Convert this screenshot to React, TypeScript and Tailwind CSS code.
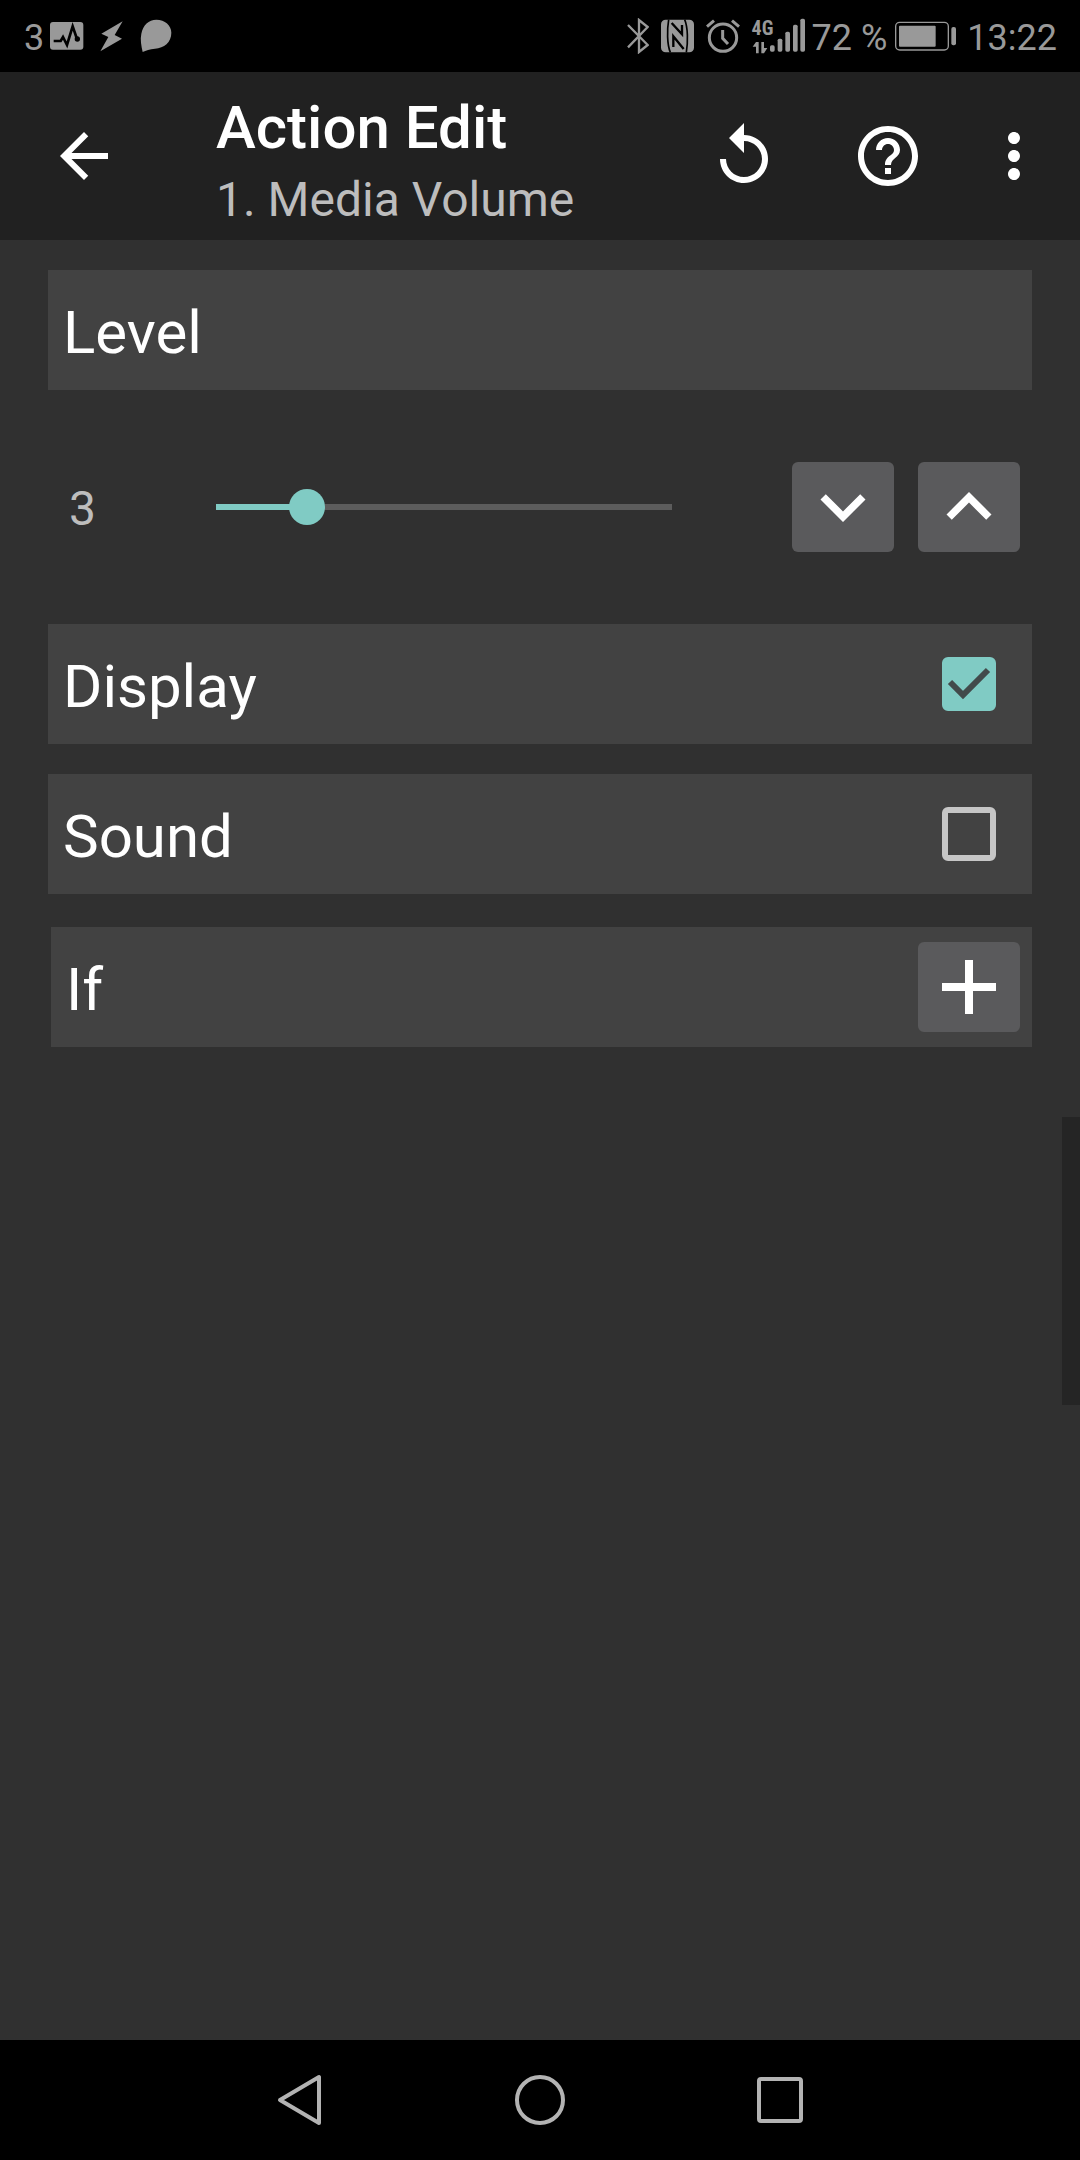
import React, { useState } from "react";
import {
  MdArrowBack,
  MdExpandLess,
  MdExpandMore,
  MdHelpOutline,
  MdMoreVert,
  MdReplay,
} from "react-icons/md";

const MAX_LEVEL = 15;

const StatusBar: React.FC = () => (
  <div className="flex h-[72px] items-center justify-between bg-black pr-[23px] pl-6 text-4xl text-[#999999]">
    <div className="flex items-center">
      <span className="pt-1">3</span>
      {/* activity monitor */}
      <svg className="ml-1.5 h-7 w-[34px]" viewBox="149 68 102 84">
        <rect x="149" y="68" width="100" height="83" rx="9" fill="currentColor" />
        <path
          d="M160 125h21l7-12 12 24 17-56 13 38"
          fill="none"
          stroke="#000"
          strokeWidth="8"
        />
        <circle cx="231" cy="119" r="8" fill="#000" />
      </svg>
      {/* bolt */}
      <svg className="ml-4 h-8 w-6" viewBox="299 62 72 96" fill="currentColor">
        <path d="M367 66l-64 37 21 10-24 43 65-38-22-11z" />
      </svg>
      {/* speech drop */}
      <svg className="ml-4 h-9 w-8" viewBox="422 55 96 108" fill="currentColor">
        <path d="M430 157c-4-18-8-38-4-55 5-26 22-42 45-42 26 0 45 17 45 39 0 29-22 46-49 48-16 1-27 6-37 10z" />
      </svg>
    </div>

    <div className="flex items-center">
      <div className="flex items-center gap-3">
        {/* bluetooth */}
        <svg
          className="h-9 w-[22px]"
          viewBox="55 55 66 108"
          fill="none"
          stroke="currentColor"
          strokeWidth="7"
        >
          <path d="M58 76l59 60-26 21V61l26 21-59 61" />
        </svg>
        {/* nfc */}
        <svg className="h-9 w-[33px]" viewBox="156 55 99 108">
          <rect x="156" y="60" width="99" height="98" rx="14" fill="currentColor" />
          <g fill="none" stroke="#000" strokeWidth="5">
            <path d="M179 60c-5 30-5 75 5 98" />
            <path d="M232 158c5-30 5-75-5-98" />
            <path d="M188 70l31 34V76" strokeWidth="7" />
            <path d="M224 148l-31-38v32" strokeWidth="7" />
          </g>
        </svg>
        {/* alarm */}
        <svg
          className="h-9 w-[34px]"
          viewBox="290 55 102 108"
          fill="none"
          stroke="currentColor"
          strokeWidth="9"
        >
          <circle cx="341" cy="114" r="41" />
          <path d="M340 91v25l16 17" />
          <path d="M293 81l21-18M389 81l-21-18" />
        </svg>
        {/* mobile network */}
        <div className="flex items-end">
          <div className="flex w-[18px] flex-col justify-between">
            <span className="font-['Liberation_Sans_Narrow','Roboto_Condensed',sans-serif] text-xl leading-4 font-bold">
              4G
            </span>
            <svg className="mt-1.5 h-3 w-[18px]" viewBox="0 0 54 36" fill="currentColor">
              <path d="M12 0h8v34h-8V14H2zM28 0h8v18h10L36 34h-8z" />
            </svg>
          </div>
          <svg className="h-9 w-9" viewBox="480 55 108 108" fill="currentColor">
            <rect x="480" y="137" width="14" height="19" rx="5" />
            <rect x="503" y="117" width="14" height="39" rx="5" />
            <rect x="526" y="96" width="14" height="60" rx="5" />
            <rect x="549" y="75" width="14" height="81" rx="5" />
            <rect x="571" y="57" width="14" height="99" rx="5" />
          </svg>
        </div>
      </div>
      <span className="ml-1.5 pt-1">72 %</span>
      {/* battery */}
      <svg className="ml-2 h-9 w-[62px]" viewBox="167 58 186 108">
        <rect
          x="169"
          y="71"
          width="158"
          height="83"
          rx="12"
          fill="none"
          stroke="currentColor"
          strokeWidth="4"
        />
        <rect x="179" y="81" width="110" height="63" rx="3" fill="currentColor" />
        <rect x="336" y="85" width="14" height="55" rx="6" fill="currentColor" />
      </svg>
      <span className="ml-2.5 pt-1">13:22</span>
    </div>
  </div>
);

const Header: React.FC = () => (
  <header className="flex h-[168px] items-center bg-[#212121] pr-3 text-white">
    <button type="button" aria-label="Back" className="flex w-[168px] justify-center">
      <MdArrowBack size={72} />
    </button>
    <div className="ml-12 flex-1 pt-4">
      <h1 className="text-6xl leading-[72px] font-medium">Action Edit</h1>
      <p className="text-5xl leading-[72px] text-[#bdbdbd]">1. Media Volume</p>
    </div>
    <button type="button" aria-label="Reset" className="flex w-36 justify-center">
      <MdReplay size={72} />
    </button>
    <button type="button" aria-label="Help" className="flex w-36 justify-center">
      <MdHelpOutline size={72} />
    </button>
    <button type="button" aria-label="More options" className="flex w-27 justify-center">
      <MdMoreVert size={72} />
    </button>
  </header>
);

interface LevelSliderProps {
  value: number;
  onChange: (value: number) => void;
}

const LevelSlider: React.FC<LevelSliderProps> = ({ value, onChange }) => (
  <div className="relative mr-[102px] flex h-9 flex-1 items-center">
    {/* track runs between the two outermost thumb centres */}
    <div className="absolute inset-x-[18px] h-1.5 bg-[#5c5c5c]">
      <div
        className="h-full bg-[#80cbc4]"
        style={{ width: `${(value / MAX_LEVEL) * 100}%` }}
      />
    </div>
    <input
      id="level"
      type="range"
      min={0}
      max={MAX_LEVEL}
      value={value}
      onChange={(e) => onChange(Number(e.target.value))}
      className="relative h-9 w-full appearance-none bg-transparent [&::-webkit-slider-thumb]:size-9 [&::-webkit-slider-thumb]:appearance-none [&::-webkit-slider-thumb]:rounded-full [&::-webkit-slider-thumb]:bg-[#80cbc4]"
    />
  </div>
);

interface CheckRowProps {
  id: string;
  label: string;
  checked: boolean;
  onChange: (checked: boolean) => void;
}

const CheckRow: React.FC<CheckRowProps> = ({ id, label, checked, onChange }) => (
  <div className="flex h-[120px] items-center justify-between bg-[#424242] pr-9 pl-[15px]">
    <label htmlFor={id} className="pt-1.5 text-6xl">
      {label}
    </label>
    <div className="relative size-[54px]">
      <input
        id={id}
        type="checkbox"
        checked={checked}
        onChange={(e) => onChange(e.target.checked)}
        className="block size-[54px] appearance-none rounded-md border-6 border-[#c6c6c6] checked:border-[#80cbc4] checked:bg-[#80cbc4]"
      />
      {checked && (
        <svg
          className="pointer-events-none absolute inset-0"
          viewBox="0 0 54 54"
          fill="none"
          stroke="#424a4b"
          strokeWidth="6"
        >
          <path d="M8 25l13 13 25-25" />
        </svg>
      )}
    </div>
  </div>
);

const squareButton =
  "flex h-[90px] w-[102px] items-center justify-center rounded-md bg-[#5a5a5c]";

const NavBar: React.FC = () => (
  <nav className="h-[120px] bg-black">
    <div className="mx-auto grid h-full w-2/3 grid-cols-3 text-[#b3b3b3]">
      <button type="button" aria-label="Back" className="flex items-center justify-center">
        <svg className="size-[54px]" viewBox="0 0 54 54" fill="none" stroke="currentColor" strokeWidth="4" strokeLinejoin="round">
          <path d="M46 4v46L7 27z" />
        </svg>
      </button>
      <button type="button" aria-label="Home" className="flex items-center justify-center">
        <svg className="size-[54px]" viewBox="0 0 54 54" fill="none" stroke="currentColor" strokeWidth="4">
          <circle cx="27" cy="27" r="23" />
        </svg>
      </button>
      <button type="button" aria-label="Recent apps" className="flex items-center justify-center">
        <svg className="size-[54px]" viewBox="0 0 54 54" fill="none" stroke="currentColor" strokeWidth="4">
          <rect x="6" y="6" width="42" height="42" rx="2" />
        </svg>
      </button>
    </div>
  </nav>
);

export default function App() {
  const [level, setLevel] = useState(3);
  const [display, setDisplay] = useState(true);
  const [sound, setSound] = useState(false);

  return (
    <div className="flex min-h-screen flex-col bg-[#303030] font-[Roboto,sans-serif] text-white">
      <StatusBar />
      <Header />

      <main className="relative flex-1 px-12 pt-[30px]">
        <div className="flex h-[120px] items-center bg-[#424242] pl-[15px]">
          <label htmlFor="level" className="pt-1.5 text-6xl">
            Level
          </label>
        </div>

        <div className="flex h-[234px] items-center pr-3 pl-[21px]">
          <output htmlFor="level" className="w-[129px] pt-1 text-5xl text-[#bdbdbd]">
            {level}
          </output>
          <LevelSlider value={level} onChange={setLevel} />
          <div className="flex gap-6">
            <button
              type="button"
              aria-label="Decrease level"
              className={squareButton}
              onClick={() => setLevel(Math.max(0, level - 1))}
            >
              <MdExpandMore size={90} />
            </button>
            <button
              type="button"
              aria-label="Increase level"
              className={squareButton}
              onClick={() => setLevel(Math.min(MAX_LEVEL, level + 1))}
            >
              <MdExpandLess size={90} />
            </button>
          </div>
        </div>

        <div className="flex flex-col gap-[30px]">
          <CheckRow id="display" label="Display" checked={display} onChange={setDisplay} />
          <CheckRow id="sound" label="Sound" checked={sound} onChange={setSound} />
        </div>

        <div className="mt-[33px] ml-[3px] flex h-[120px] items-center justify-between bg-[#424242] pr-3 pl-[15px]">
          <span className="pt-1.5 text-6xl">If</span>
          <button type="button" aria-label="Add condition" className={squareButton}>
            <svg className="size-[54px]" viewBox="0 0 54 54" stroke="currentColor" strokeWidth="8">
              <path d="M27 0v54M0 27h54" />
            </svg>
          </button>
        </div>

        {/* edge swipe handle */}
        <div className="absolute top-[877px] right-0 h-72 w-[18px] bg-[#252525]" />
      </main>

      <NavBar />
    </div>
  );
}
